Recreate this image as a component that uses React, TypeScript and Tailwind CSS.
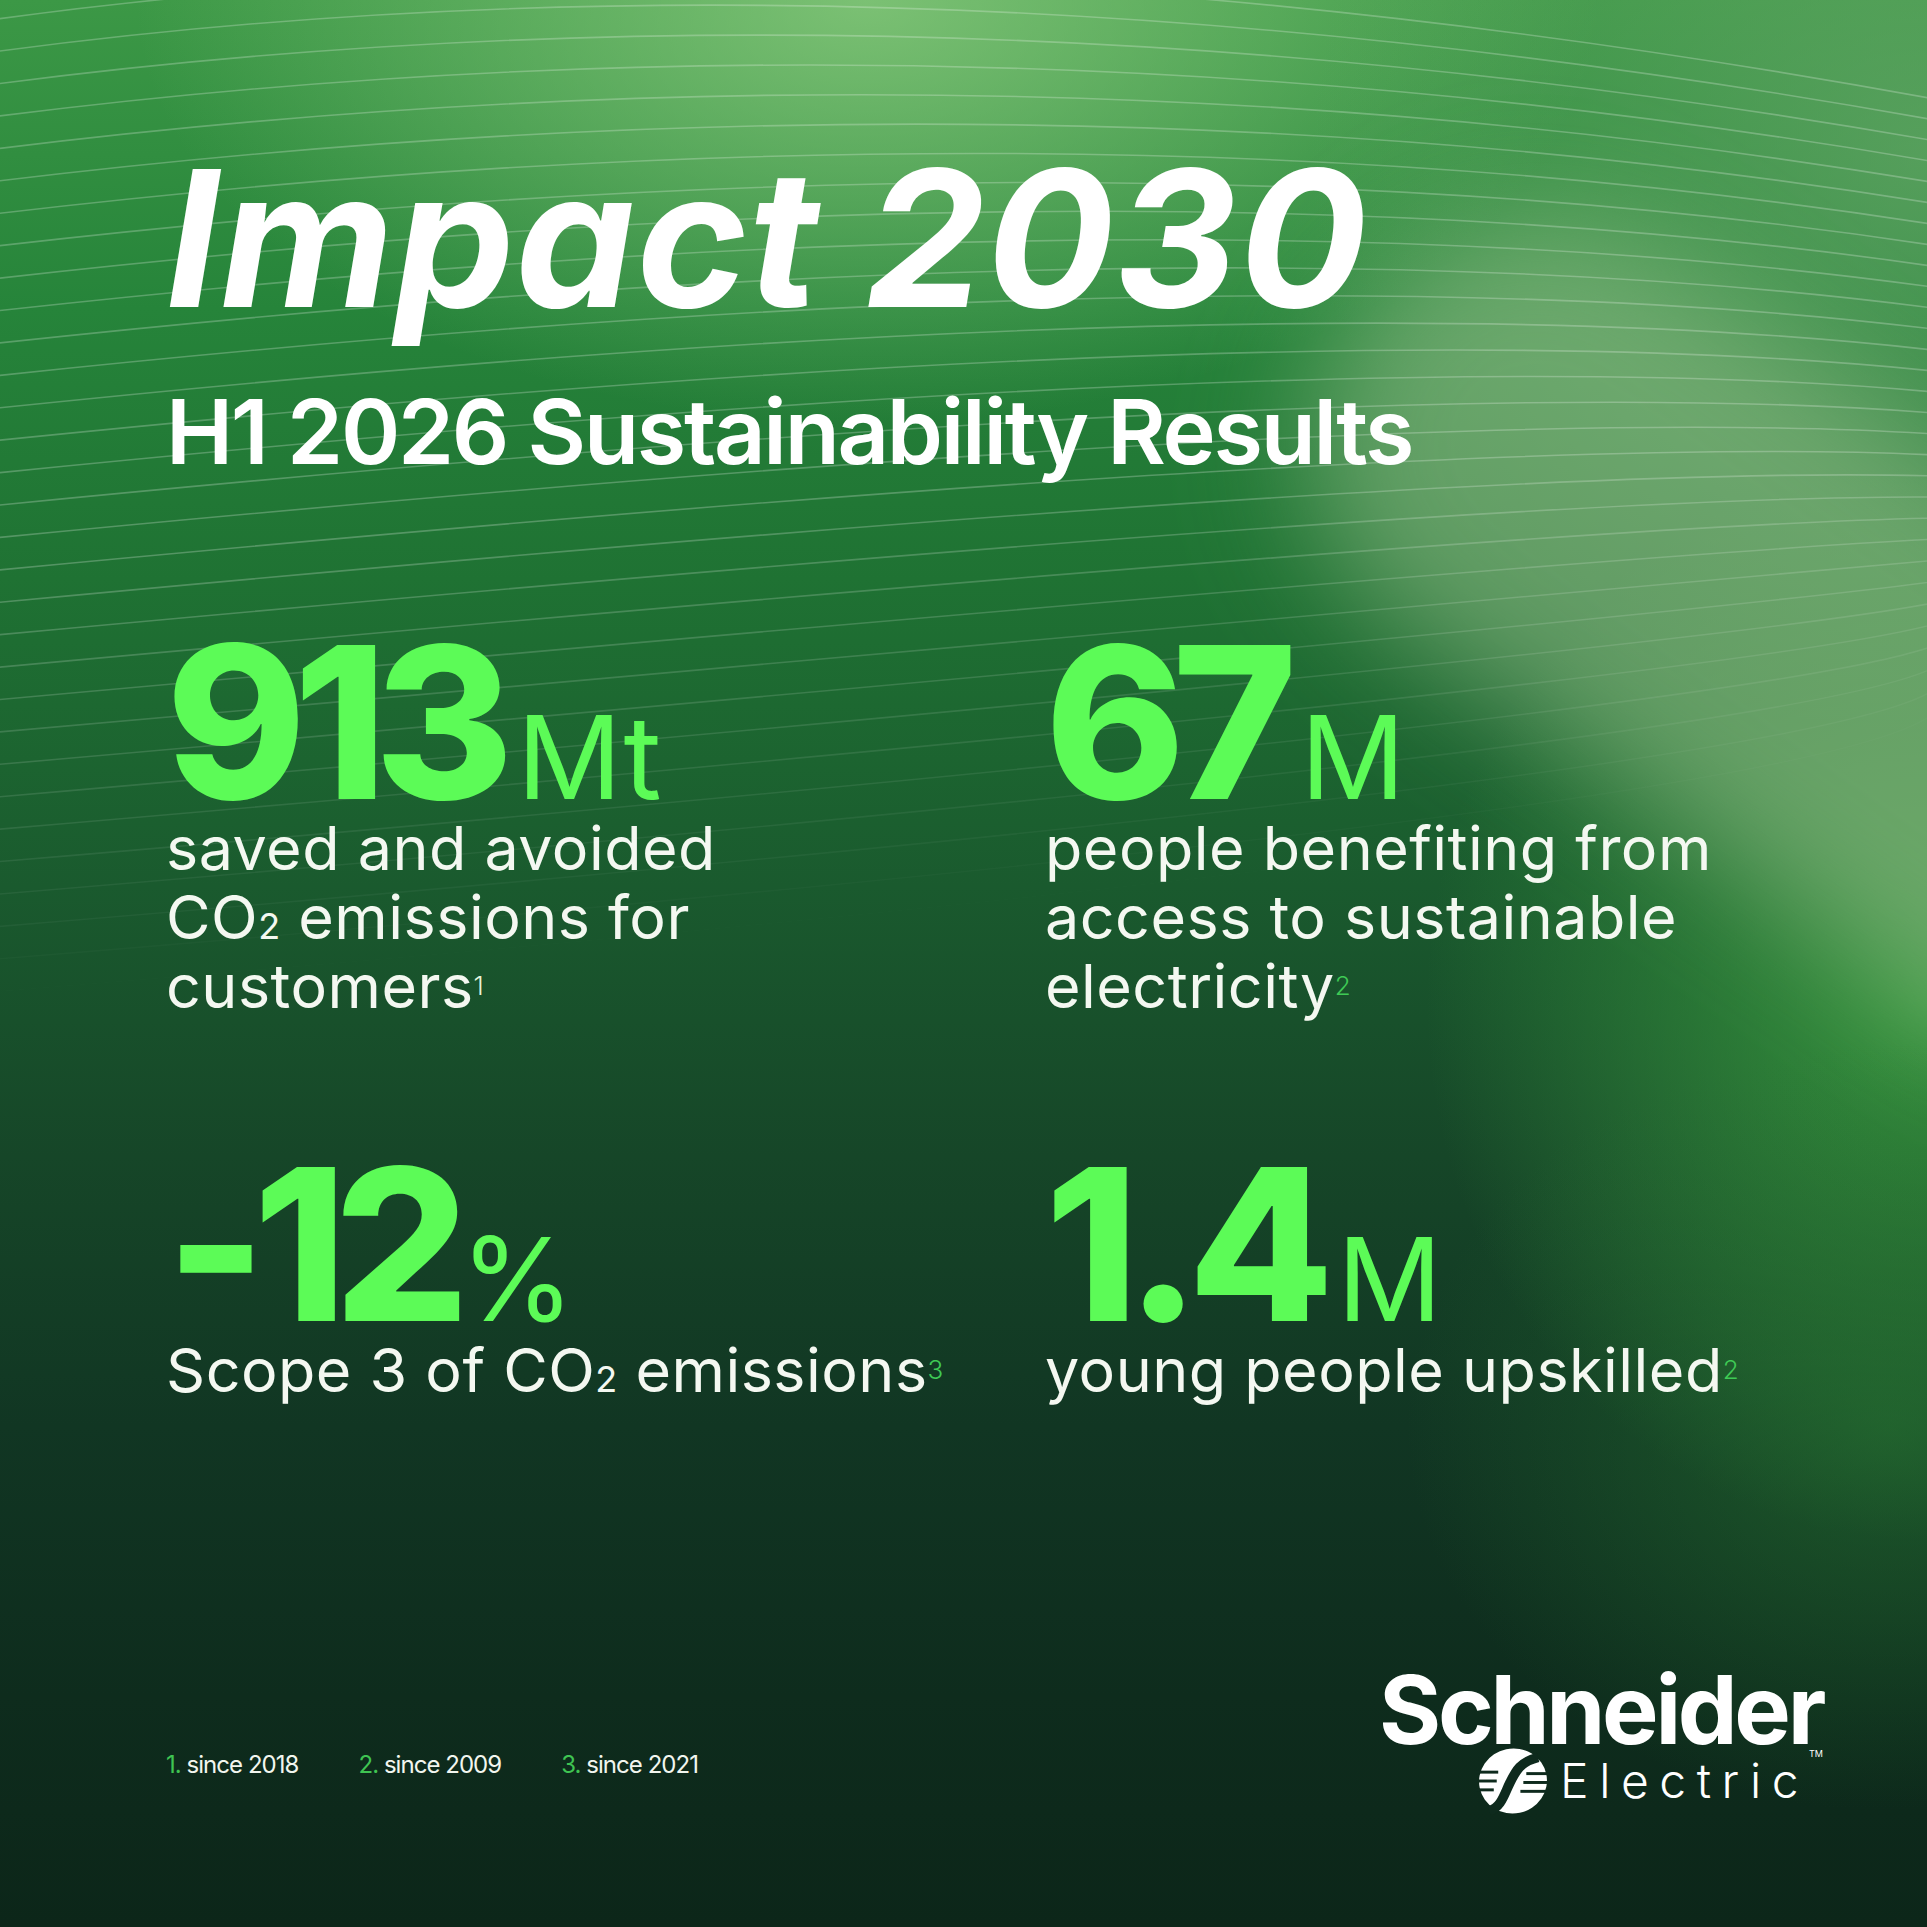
import React from 'react'

const font = { fontFamily: 'Inter, "Noto Sans", Arial, sans-serif' }

// thin arcs across the upper half of the background
const arcs = Array.from({ length: 31 }, (_, i) => {
  const yL = 20 + i * 32.4
  const cx = 850 + i * 35.7
  const cy = -100 + i * 31.2
  const yR = 100 + i * 20.9
  const o = i < 18 ? 0.24 : Math.max(0, 0.24 - (i - 17) * 0.018)
  return { d: `M -10 ${yL} Q ${cx} ${cy} 1940 ${yR}`, o }
})

function Sup({ children, green = true }: { children: React.ReactNode; green?: boolean }) {
  return (
    <span className={`text-[26px] leading-none align-[13px] font-light ${green ? 'text-[#3fca55]' : 'text-[#e4f3dc]'}`}>
      {children}
    </span>
  )
}

function Sub() {
  return <span className="text-[36px] leading-none">2</span>
}

function Stat({ value, unit, children, unitGap = 'ml-[16px]' }: { value: string; unit: string; children: React.ReactNode; unitGap?: string }) {
  return (
    <div>
      <div className="flex items-baseline h-[180px] text-[#5cfb57]">
        <span className="text-[212px] leading-[180px] font-extrabold tracking-[-0.06em]">{value}</span>
        <span className={`${unitGap} text-[116px] leading-[100px] font-normal`}>{unit}</span>
      </div>
      <div className="mt-[2px] text-[61px] leading-[69px] font-normal text-[#f4f8f1] tracking-[0.008em]">{children}</div>
    </div>
  )
}

function LogoMark() {
  return (
    <svg width="74" height="68" viewBox="0 0 100 92">
      <ellipse cx="50" cy="46" rx="46" ry="44" transform="rotate(-12 50 46)" fill="#ffffff" />
      <path d="M 18 86 C 34 82 38 64 46 48 C 54 32 60 20 84 14" stroke="#0e2a1d" strokeWidth="13" fill="none" />
      <g stroke="#0e2a1d" strokeWidth="4">
        <line x1="0" y1="34" x2="30" y2="34" />
        <line x1="0" y1="46" x2="28" y2="46" />
        <line x1="0" y1="58" x2="24" y2="58" />
        <line x1="68" y1="36" x2="100" y2="36" />
        <line x1="64" y1="48" x2="100" y2="48" />
        <line x1="60" y1="60" x2="100" y2="60" />
      </g>
    </svg>
  )
}

export default function App() {
  return (
    <div className="relative w-[1927px] h-[1927px] overflow-hidden bg-[#0c261a]" style={font}>
      {/* background layers */}
      <div className="absolute inset-0 bg-[linear-gradient(180deg,#3c9846_0%,#26843a_16%,#1f7233_30%,#1a5a2e_46%,#164628_60%,#113623_74%,#0e2c1d_88%,#0c2619_100%)]" />
      <div className="absolute inset-0 bg-[radial-gradient(ellipse_38%_22%_at_45%_0%,rgba(150,210,135,0.7),rgba(150,210,135,0)_100%)]" />
      <div className="absolute inset-0 bg-[radial-gradient(ellipse_32%_30%_at_100%_8%,rgba(110,170,110,0.6),rgba(110,170,110,0)_100%)]" />
      <div className="absolute inset-0 bg-[radial-gradient(ellipse_26%_28%_at_100%_52%,rgba(60,160,65,0.85),rgba(60,160,65,0)_100%)]" />
      <div className="absolute left-[1250px] top-[400px] w-[1100px] h-[460px] rotate-[35deg] rounded-full bg-[rgba(160,195,145,0.52)] blur-[60px]" />
      <div className="absolute inset-0 bg-[radial-gradient(ellipse_25%_20%_at_98%_74%,rgba(40,120,50,0.55),rgba(40,120,50,0)_100%)]" />
      <svg className="absolute inset-0" width="1927" height="1927" viewBox="0 0 1927 1927">
        {arcs.map((a, i) => (
          <path key={i} d={a.d} stroke="#ffffff" strokeOpacity={a.o} strokeWidth="1.6" fill="none" />
        ))}
      </svg>

      {/* content */}
      <div className="relative flex flex-col h-full pl-[166px] pr-[100px]">
        <h1 className="mt-[143px] text-[190px] leading-none font-bold italic text-white tracking-[0.005em]">
          Impact 2030
        </h1>
        <h2 className="mt-[54px] text-[90px] leading-none font-semibold text-white tracking-[-0.025em]">
          H1 2026 Sustainability Results
        </h2>

        <div className="mt-[155px] grid grid-cols-[879px_1fr] gap-y-[133px]">
          <Stat value="913" unit="Mt">
            saved and avoided
            <br />
            CO<Sub /> emissions for
            <br />
            customers<Sup green={false}>1</Sup>
          </Stat>
          <Stat value="67" unit="M">
            people benefiting from
            <br />
            access to sustainable
            <br />
            electricity<Sup>2</Sup>
          </Stat>
          <Stat value="-12" unit="%" unitGap="ml-[4px]">
            Scope 3 of CO<Sub /> emissions<Sup>3</Sup>
          </Stat>
          <Stat value="1.4" unit="M">
            young people upskilled<Sup>2</Sup>
          </Stat>
        </div>

        <div className="mt-auto mb-[112px] flex items-end justify-between">
          <div className="flex gap-[60px] text-[24px] leading-none text-[#f2f6ef] tracking-[-0.04em] mb-[38px]">
            <span>
              <span className="text-[#3fc452]">1.</span> since 2018
            </span>
            <span>
              <span className="text-[#3fc452]">2.</span> since 2009
            </span>
            <span>
              <span className="text-[#3fc452]">3.</span> since 2021
            </span>
          </div>
          <div className="flex flex-col items-end mr-[4px]">
            <div className="text-[95px] leading-[80px] font-bold text-white tracking-[-0.035em]">Schneider</div>
            <div className="flex items-center -mt-[3px]">
              <LogoMark />
              <span className="ml-[10px] text-[48px] leading-none font-light text-white tracking-[0.22em]">Electric</span>
              <span className="self-start text-[9px] text-white">TM</span>
            </div>
          </div>
        </div>
      </div>
    </div>
  )
}
